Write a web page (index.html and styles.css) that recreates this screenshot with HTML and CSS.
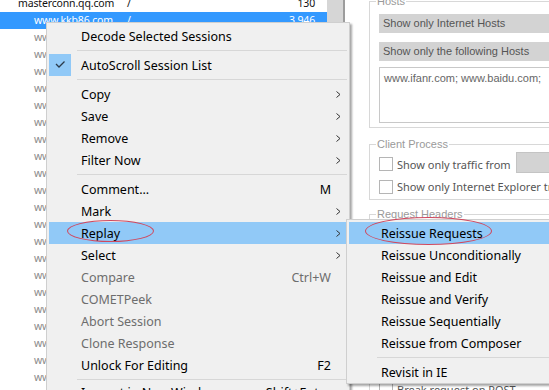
FILE: index.html
```html
<!DOCTYPE html>
<html>
<head>
<meta charset="utf-8">
<link rel="stylesheet" href="styles.css">
</head>
<body>
<div class="app">
  <div class="sessions">
    <div class="row first"><span class="host h0">masterconn.qq.com</span><span class="url">/</span><span class="size">130</span></div>
    <div class="row sel"><span class="host">www.kkb86.com</span><span class="url">/</span><span class="size">3,946</span></div>
    <div class="row"><span class="host">www.kkb86.com</span><span class="url">/a</span><span class="size">512</span></div>
    <div class="row"><span class="host">www.kkb86.com</span><span class="url">/b</span><span class="size">512</span></div>
    <div class="row"><span class="host">www.kkb86.com</span><span class="url">/c</span><span class="size">512</span></div>
    <div class="row"><span class="host">www.kkb86.com</span><span class="url">/d</span><span class="size">512</span></div>
    <div class="row"><span class="host">www.kkb86.com</span><span class="url">/e</span><span class="size">512</span></div>
    <div class="row"><span class="host">www.kkb86.com</span><span class="url">/f</span><span class="size">512</span></div>
    <div class="row"><span class="host">www.kkb86.com</span><span class="url">/g</span><span class="size">512</span></div>
    <div class="row"><span class="host">www.kkb86.com</span><span class="url">/h</span><span class="size">512</span></div>
    <div class="row"><span class="host">www.kkb86.com</span><span class="url">/i</span><span class="size">512</span></div>
    <div class="row"><span class="host">www.kkb86.com</span><span class="url">/j</span><span class="size">512</span></div>
    <div class="row"><span class="host">www.kkb86.com</span><span class="url">/k</span><span class="size">512</span></div>
    <div class="row"><span class="host">www.kkb86.com</span><span class="url">/l</span><span class="size">512</span></div>
    <div class="row"><span class="host">www.kkb86.com</span><span class="url">/m</span><span class="size">512</span></div>
    <div class="row"><span class="host">www.kkb86.com</span><span class="url">/n</span><span class="size">512</span></div>
    <div class="row"><span class="host">www.kkb86.com</span><span class="url">/o</span><span class="size">512</span></div>
    <div class="row"><span class="host">www.kkb86.com</span><span class="url">/p</span><span class="size">512</span></div>
    <div class="row"><span class="host">www.kkb86.com</span><span class="url">/q</span><span class="size">512</span></div>
    <div class="row"><span class="host">www.kkb86.com</span><span class="url">/r</span><span class="size">512</span></div>
    <div class="row"><span class="host">www.kkb86.com</span><span class="url">/s</span><span class="size">512</span></div>
    <div class="row"><span class="host">www.kkb86.com</span><span class="url">/t</span><span class="size">512</span></div>
    <div class="row"><span class="host">www.kkb86.com</span><span class="url">/u</span><span class="size">512</span></div>
  </div>
  <div class="vscroll"></div>
  <div class="panel">
    <fieldset class="group hosts">
      <legend>Hosts</legend>
      <div class="gbody">
        <div class="btn">Show only Internet Hosts</div>
        <div class="btn btn2">Show only the following Hosts</div>
        <div class="hostlist">www.ifanr.com; www.baidu.com;</div>
      </div>
    </fieldset>
    <fieldset class="group client">
      <legend>Client Process</legend>
      <div class="gbody">
        <div class="chk-row r1"><span class="chk"></span><span class="clabel">Show only traffic from</span><span class="combo"></span></div>
        <div class="chk-row r2"><span class="chk"></span><span class="clabel">Show only Internet Explorer traffic</span></div>
      </div>
    </fieldset>
    <fieldset class="group headers">
      <legend>Request Headers</legend>
      <div class="gbody">
        <div class="filler"></div>
        <div class="chk-row"><span class="chk"></span><span class="clabel">Break request on POST</span></div>
      </div>
    </fieldset>
  </div>
</div>

<div class="menu">
  <div class="item"><span class="label">Decode Selected Sessions</span></div>
  <div class="sep"></div>
  <div class="item checked"><span class="check"><svg width="22" height="22" viewBox="0 0 22 22"><polyline points="7,10 10,13 15.5,7.5" fill="none" stroke="#2b3a4a" stroke-width="1.3"/></svg></span><span class="label">AutoScroll Session List</span></div>
  <div class="sep"></div>
  <div class="item"><span class="label">Copy</span><svg class="arrow" width="5" height="7" viewBox="0 0 5 7"><polyline points="0.5,0.5 4,3.5 0.5,6.5" fill="none" stroke="#333" stroke-width="1"/></svg></div>
  <div class="item"><span class="label">Save</span><svg class="arrow" width="5" height="7" viewBox="0 0 5 7"><polyline points="0.5,0.5 4,3.5 0.5,6.5" fill="none" stroke="#333" stroke-width="1"/></svg></div>
  <div class="item"><span class="label">Remove</span><svg class="arrow" width="5" height="7" viewBox="0 0 5 7"><polyline points="0.5,0.5 4,3.5 0.5,6.5" fill="none" stroke="#333" stroke-width="1"/></svg></div>
  <div class="item"><span class="label">Filter Now</span><svg class="arrow" width="5" height="7" viewBox="0 0 5 7"><polyline points="0.5,0.5 4,3.5 0.5,6.5" fill="none" stroke="#333" stroke-width="1"/></svg></div>
  <div class="sep"></div>
  <div class="item"><span class="label">Comment...</span><span class="key">M</span></div>
  <div class="item"><span class="label">Mark</span><svg class="arrow" width="5" height="7" viewBox="0 0 5 7"><polyline points="0.5,0.5 4,3.5 0.5,6.5" fill="none" stroke="#333" stroke-width="1"/></svg></div>
  <div class="item hot"><span class="label">Replay</span><svg class="arrow" width="5" height="7" viewBox="0 0 5 7"><polyline points="0.5,0.5 4,3.5 0.5,6.5" fill="none" stroke="#333" stroke-width="1"/></svg></div>
  <div class="item"><span class="label">Select</span><svg class="arrow" width="5" height="7" viewBox="0 0 5 7"><polyline points="0.5,0.5 4,3.5 0.5,6.5" fill="none" stroke="#333" stroke-width="1"/></svg></div>
  <div class="item off"><span class="label">Compare</span><span class="key">Ctrl+W</span></div>
  <div class="item off"><span class="label">COMETPeek</span></div>
  <div class="item off"><span class="label">Abort Session</span></div>
  <div class="item off"><span class="label">Clone Response</span></div>
  <div class="item"><span class="label">Unlock For Editing</span><span class="key">F2</span></div>
  <div class="sep last"></div>
  <div class="item"><span class="label">Inspect in New Window...</span><span class="key">Shift+Enter</span></div>
</div>

<div class="submenu">
  <div class="item hot"><span class="label">Reissue Requests</span></div>
  <div class="item"><span class="label">Reissue Unconditionally</span></div>
  <div class="item"><span class="label">Reissue and Edit</span></div>
  <div class="item"><span class="label">Reissue and Verify</span></div>
  <div class="item"><span class="label">Reissue Sequentially</span></div>
  <div class="item"><span class="label">Reissue from Composer</span></div>
  <div class="sep"></div>
  <div class="item"><span class="label">Revisit in IE</span></div>
</div>

<div class="mark mark-replay"></div>
<div class="mark mark-reissue"></div>
</body>
</html>
```

FILE: styles.css
```css
* { box-sizing: border-box; }
html, body { margin: 0; padding: 0; }
body {
  width: 549px;
  height: 390px;
  overflow: hidden;
  position: relative;
  background: #fff;
  font-family: "Noto Sans", sans-serif;
}
.app { display: flex; height: 390px; }

/* session list */
.sessions {
  width: 327px;
  flex: none;
  overflow: hidden;
  font-size: 10.5px;
  letter-spacing: -0.15px;
}
.row {
  display: flex;
  height: 17px;
  line-height: 17px;
  color: #8a8a8a;
  white-space: nowrap;
}
.row.first { margin-top: -5px; color: #111; }
.row.sel { background: #3399ff; color: #fff; }
.host { width: 127px; padding-left: 34px; flex: none; overflow: hidden; }
.host.h0 { padding-left: 18px; }
.url { flex: 1; }
.size { padding-right: 12px; }

.vscroll {
  width: 18px;
  flex: none;
  background: #d6d6d6;
  border-right: 2px solid #9c9c9c;
}

/* filter panel */
.panel {
  flex: 1;
  min-width: 0;
  overflow: hidden;
  padding-left: 24px;
  font-family: "Liberation Sans", sans-serif;
  font-size: 11px;
  color: #555;
}
.group {
  margin: 0;
  padding: 0;
  width: 240px;
  border: 1px solid #d8d8d8;
}
.group legend {
  margin-left: 6px;
  padding: 0 1px;
  color: #9a9a9a;
  font-size: 11px;
  line-height: 13px;
}
.gbody { padding-left: 9px; }
.hosts { margin-top: -5px; }
.hosts .gbody { padding-top: 6px; padding-bottom: 4px; }
.btn {
  height: 19px;
  line-height: 19px;
  padding-left: 4px;
  background: #d3d3d3;
  color: #555;
}
.btn2 { margin-top: 9px; }
.hostlist {
  margin-top: 6px;
  height: 56px;
  border: 1px solid #c8c8c8;
  background: #fff;
  padding: 3px 4px;
  color: #666;
  line-height: 14px;
}
.client { margin-top: 10px; }
.client .gbody { padding-top: 1px; padding-bottom: 3px; }
.chk-row { display: flex; align-items: center; height: 21px; }
.chk-row.r2 { margin-top: 4px; height: 19px; }
.chk {
  width: 14px;
  height: 14px;
  flex: none;
  border: 1px solid #b5b5b5;
  background: #fff;
  margin-right: 4px;
}
.clabel {
  font-family: "Noto Sans", sans-serif;
  font-size: 11px;
  color: #555;
  white-space: nowrap;
}
.r1 .chk { margin-top: 3px; }
.r1 .clabel { margin-top: 3px; }
.combo {
  margin-left: 5px;
  width: 100px;
  height: 21px;
  flex: none;
  background: #d3d3d3;
  border: 1px solid #c4c4c4;
}
.headers { margin-top: 8px; }
.filler { height: 158px; }

/* context menu */
.menu, .submenu {
  position: absolute;
  background: #f0f0f0;
  border: 1px solid #cfcfcf;
  padding: 2px;
  font-family: "Noto Sans", sans-serif;
  font-size: 12.5px;
  color: #000;
  box-shadow: 2px 2px 2px rgba(0, 0, 0, 0.35);
}
.menu { left: 46px; top: 22px; width: 304px; }
.submenu { left: 346px; top: 219px; width: 230px; padding-bottom: 0; }
.item {
  position: relative;
  display: flex;
  align-items: center;
  height: 22px;
  padding-left: 32px;
  padding-right: 16px;
  white-space: nowrap;
}
.item .label { flex: 1; }
.item.hot { background: #91c9f7; }
.item.off { color: #6d6d6d; }
.key { text-align: right; }
.arrow { position: absolute; right: 6px; top: 8px; }
.check {
  position: absolute;
  left: 0;
  top: 0;
  width: 22px;
  height: 22px;
  background: #91c9f7;
}
.check svg { display: block; }
.sep {
  height: 7px;
  margin-left: 28px;
  background: linear-gradient(#d7d7d7, #d7d7d7) no-repeat 0 3px / 100% 1px;
}
.sep.last { height: 5px; }

/* red annotation ellipses */
.mark {
  position: absolute;
  border: 1px solid #d0485e;
  border-radius: 50%;
}
.mark-replay { left: 67px; top: 220px; width: 87px; height: 22px; }
.mark-reissue { left: 365px; top: 217px; width: 127px; height: 28px; }
```
